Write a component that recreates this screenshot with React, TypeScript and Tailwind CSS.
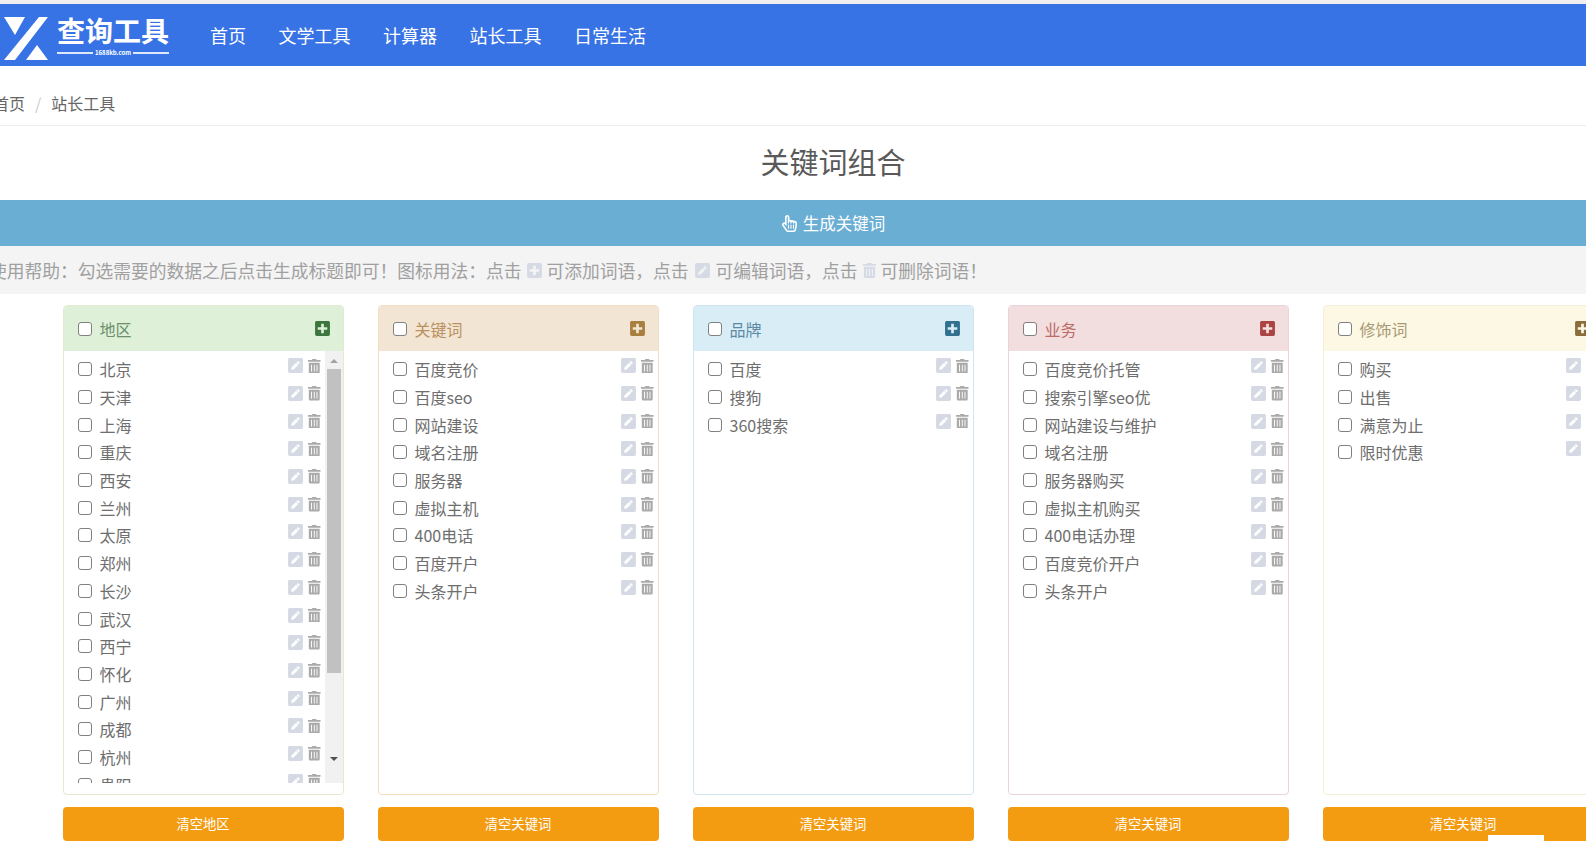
import { FaPenSquare, FaPlusSquare, FaRegHandPointer, FaTrashAlt } from "react-icons/fa"

const nav = ["首页", "文学工具", "计算器", "站长工具", "日常生活"]

const panels = [
  {
    title: "地区",
    head: "bg-[#dff0d8]",
    border: "border-[#e2ead2]",
    text: "text-[#6c8f6d]",
    icon: "text-[#3c763d]",
    clear: "清空地区",
    scroll: true,
    items: ["北京", "天津", "上海", "重庆", "西安", "兰州", "太原", "郑州", "长沙", "武汉", "西宁", "怀化", "广州", "成都", "杭州", "贵阳", "南京", "合肥", "济南", "福州"],
  },
  {
    title: "关键词",
    head: "bg-[#f3e5d3]",
    border: "border-[#f3dfc0]",
    text: "text-[#b8915f]",
    icon: "text-[#a97f3f]",
    clear: "清空关键词",
    items: ["百度竞价", "百度seo", "网站建设", "域名注册", "服务器", "虚拟主机", "400电话", "百度开户", "头条开户"],
  },
  {
    title: "品牌",
    head: "bg-[#d9edf7]",
    border: "border-[#cfe4ee]",
    text: "text-[#5b8aa5]",
    icon: "text-[#31708f]",
    clear: "清空关键词",
    items: ["百度", "搜狗", "360搜索"],
  },
  {
    title: "业务",
    head: "bg-[#f2dede]",
    border: "border-[#e8d3da]",
    text: "text-[#bd6a68]",
    icon: "text-[#a94442]",
    clear: "清空关键词",
    items: ["百度竞价托管", "搜索引擎seo优", "网站建设与维护", "域名注册", "服务器购买", "虚拟主机购买", "400电话办理", "百度竞价开户", "头条开户"],
  },
  {
    title: "修饰词",
    head: "bg-[#fcf8e3]",
    border: "border-[#f5efd8]",
    text: "text-[#a89878]",
    icon: "text-[#8a6d3b]",
    clear: "清空关键词",
    items: ["购买", "出售", "满意为止", "限时优惠"],
  },
]

function Logo() {
  return (
    <div className="flex items-center">
      <svg width="48" height="48" viewBox="0 0 48 48" className="ml-[3px] mt-[4px]" aria-hidden>
        <path fill="#fff" d="M1 4h21L12 22zM36 4h9L12 47H1zM23 47l11-15 11 15z" />
      </svg>
      <div className="ml-[6px] flex w-[112px] flex-col items-center text-white">
        <div className="h-[34px] whitespace-nowrap text-[28px] font-bold leading-[34px]">查询工具</div>
        <div className="mt-[2px] flex w-full items-center gap-[2px]">
          <span className="h-[1.5px] flex-1 bg-[#dfe8fb]" />
          <span className="text-[6px] font-bold leading-[8px]">1688kb.com</span>
          <span className="h-[1.5px] flex-1 bg-[#dfe8fb]" />
        </div>
      </div>
    </div>
  )
}

function Check() {
  return (
    <input
      type="checkbox"
      className="m-0 size-[14px] shrink-0 appearance-none rounded-[3px] border border-[#808080] bg-white"
    />
  )
}

function Scrollbar() {
  return (
    <div className="flex w-[18px] shrink-0 flex-col items-center bg-[#f1f1f1]">
      <div className="mt-[8px] h-0 w-0 border-x-[4px] border-b-[4px] border-x-transparent border-b-[#a3a3a3]" />
      <div className="mt-[6px] h-[304px] w-[14px] bg-[#c1c1c1]" />
      <div className="mt-[84px] h-0 w-0 border-x-[4px] border-t-[4px] border-x-transparent border-t-[#505050]" />
    </div>
  )
}

function Panel({ panel }: { panel: (typeof panels)[number] }) {
  return (
    <div className="w-[281px] shrink-0">
      <div className={`h-[490px] overflow-hidden rounded-[4px] border ${panel.border}`}>
        <div className={`flex h-[45px] items-center pl-[14px] pr-[12px] ${panel.head}`}>
          <Check />
          <span className={`ml-[8px] text-[16px] ${panel.text}`}>{panel.title}</span>
          <FaPlusSquare className={`ml-auto size-[17px] ${panel.icon}`} />
        </div>
        <div className="flex h-[432px]">
          <ul className="flex-1 overflow-hidden pt-[4.5px]">
            {panel.items.map((item) => (
              <li key={item} className="flex h-[27.7px] items-center pl-[14px] pr-[3px] text-[16px] text-[#6e6e6e]">
                <Check />
                <span className="ml-[8px] whitespace-nowrap">{item}</span>
                <FaPenSquare className="mb-[7px] ml-auto size-[17px] text-[#d5d9e4]" />
                <FaTrashAlt className="mb-[7px] ml-[3px] size-[14.5px] text-[#aaa]" />
              </li>
            ))}
          </ul>
          {panel.scroll && <Scrollbar />}
        </div>
      </div>
      <button className="mt-[12px] h-[34px] w-full rounded-[4px] bg-[#f39c12] text-[13.3px] text-white">
        {panel.clear}
      </button>
    </div>
  )
}

export default function App() {
  return (
    <div className="relative h-[842px] overflow-hidden bg-white font-['Noto_Sans_CJK_SC','Liberation_Sans',sans-serif]">
      <div className="h-[4px] bg-[#efefef]" />
      <header className="flex h-[62px] items-center bg-[#3873e6]">
        <Logo />
        <nav className="ml-[41px] flex gap-[32.5px] text-[18px] text-white">
          {nav.map((n) => (
            <a key={n} className="whitespace-nowrap">{n}</a>
          ))}
        </nav>
      </header>
      <div className="-ml-[10px] w-[1686px]">
        <div className="flex h-[60px] items-center border-b border-[#eee] pl-[3px] pt-[15px] text-[16px] text-[#666]">
          <span>首页</span>
          <span className="mx-[10px] text-[#ccc]">/</span>
          <span>站长工具</span>
        </div>
        <h1 className="flex h-[74px] items-center justify-center pb-[3px] text-[29px] text-[#5a5a5a]">关键词组合</h1>
        <button className="flex h-[46px] w-full items-center justify-center gap-[5px] bg-[#6baed4] text-[16.5px] text-white">
          <FaRegHandPointer className="size-[17px]" />
          生成关键词
        </button>
        <p className="-ml-[1px] flex h-[48px] items-center whitespace-nowrap bg-[#f4f4f4] text-[17.75px] text-[#a0a0a0]">
          使用帮助：勾选需要的数据之后点击生成标题即可！图标用法：点击
          <FaPlusSquare className="mx-[4px] size-[17px] text-[#d5dae5]" />
          可添加词语，点击
          <FaPenSquare className="mx-[5px] size-[17px] text-[#d5dae5]" />
          可编辑词语，点击
          <FaTrashAlt className="mx-[4px] size-[15px] text-[#d5dae5]" />
          可删除词语！
        </p>
        <div className="mt-[11px] flex justify-center gap-[34px]">
          {panels.map((p) => (
            <Panel key={p.title} panel={p} />
          ))}
        </div>
      </div>
      <div className="absolute bottom-0 left-[1488px] h-[7px] w-[56px] bg-white" />
    </div>
  )
}
